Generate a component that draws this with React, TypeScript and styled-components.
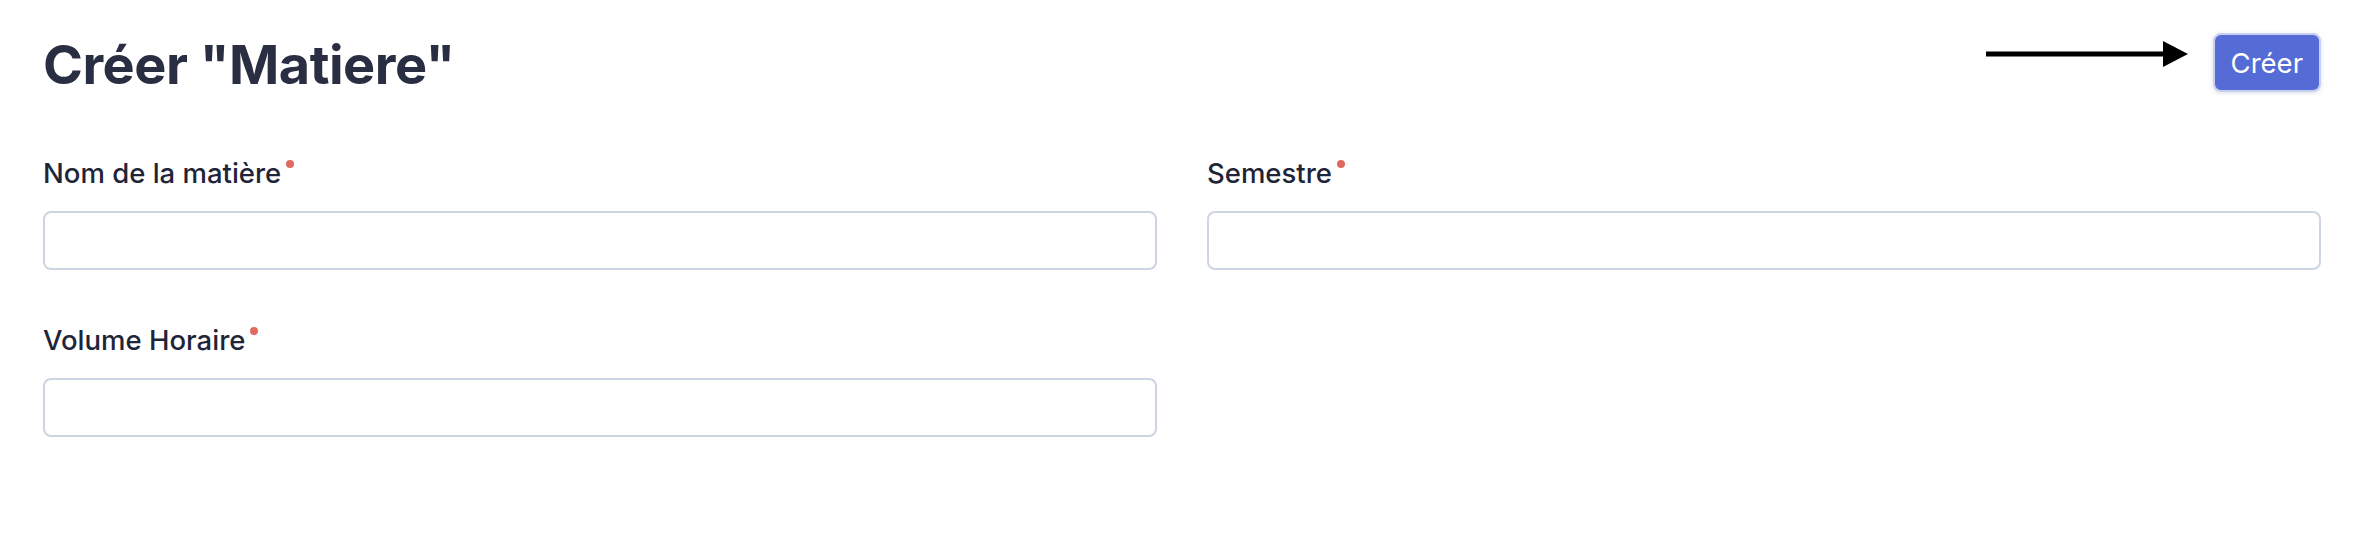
import React from "react";
import styled, { createGlobalStyle } from "styled-components";

const GlobalStyle = createGlobalStyle`
  html, body { margin: 0; padding: 0; background: #ffffff; }
  body { font-family: Inter, "Noto Sans", sans-serif; }
  * { box-sizing: border-box; }
`;

const Page = styled.div`
  padding: 32px 43px 40px 43px;
  display: flex;
  flex-direction: column;
`;

const Header = styled.div`
  display: flex;
  align-items: center;
  justify-content: space-between;
`;

const Title = styled.h1`
  margin: 0;
  font-family: Inter, sans-serif;
  font-size: 54px;
  line-height: 65px;
  font-weight: 700;
  color: #2a2e42;
  letter-spacing: -0.5px;
`;

const Actions = styled.div`
  display: flex;
  align-items: center;
  gap: 25px;
  margin-bottom: 4px;
`;

const ArrowBox = styled.span`
  display: flex;
  margin-bottom: 17px;
`;

const CreateButton = styled.button`
  height: 59px;
  padding: 0 16px;
  border-radius: 8px;
  border: 2px solid #c9cff0;
  background: #556cd6;
  color: #ffffff;
  font-family: Inter, sans-serif;
  font-size: 27.5px;
  font-weight: 400;
  box-shadow: 0 1px 4px rgba(60, 70, 120, 0.18);
  cursor: pointer;
`;

const Form = styled.div`
  margin-top: 60px;
  display: grid;
  grid-template-columns: 1fr 1fr;
  column-gap: 50px;
  row-gap: 54px;
`;

const Field = styled.div`
  display: flex;
  flex-direction: column;
  gap: 21px;
`;

const Label = styled.label`
  font-family: Inter, sans-serif;
  font-size: 27.5px;
  line-height: 33px;
  font-weight: 500;
  color: #1f2538;
`;

const Required = styled.span`
  display: inline-block;
  width: 8px;
  height: 8px;
  border-radius: 50%;
  background: #e06a5f;
  margin-left: 5px;
  vertical-align: top;
  margin-top: 3px;
`;

const Input = styled.input`
  height: 59px;
  width: 100%;
  border: 2px solid #cdd5e2;
  border-radius: 8px;
  background: #fff;
  outline: none;
  font-size: 24px;
  padding: 0 14px;
`;

const Arrow = () => (
  <svg width="202" height="26" viewBox="0 0 202 26" aria-hidden>
    <line x1="0" y1="13" x2="180" y2="13" stroke="#000" strokeWidth="5" />
    <polygon points="177,0 202,13 177,26" fill="#000" />
  </svg>
);

const fields = [
  { label: "Nom de la matière" },
  { label: "Semestre" },
  { label: "Volume Horaire" },
];

export default function App() {
  return (
    <>
      <GlobalStyle />
      <Page>
        <Header>
          <Title>Créer "Matiere"</Title>
          <Actions>
            <ArrowBox>
              <Arrow />
            </ArrowBox>
            <CreateButton>Créer</CreateButton>
          </Actions>
        </Header>
        <Form>
          {fields.map((f) => (
            <Field key={f.label}>
              <Label>
                {f.label}
                <Required />
              </Label>
              <Input />
            </Field>
          ))}
        </Form>
      </Page>
    </>
  );
}
